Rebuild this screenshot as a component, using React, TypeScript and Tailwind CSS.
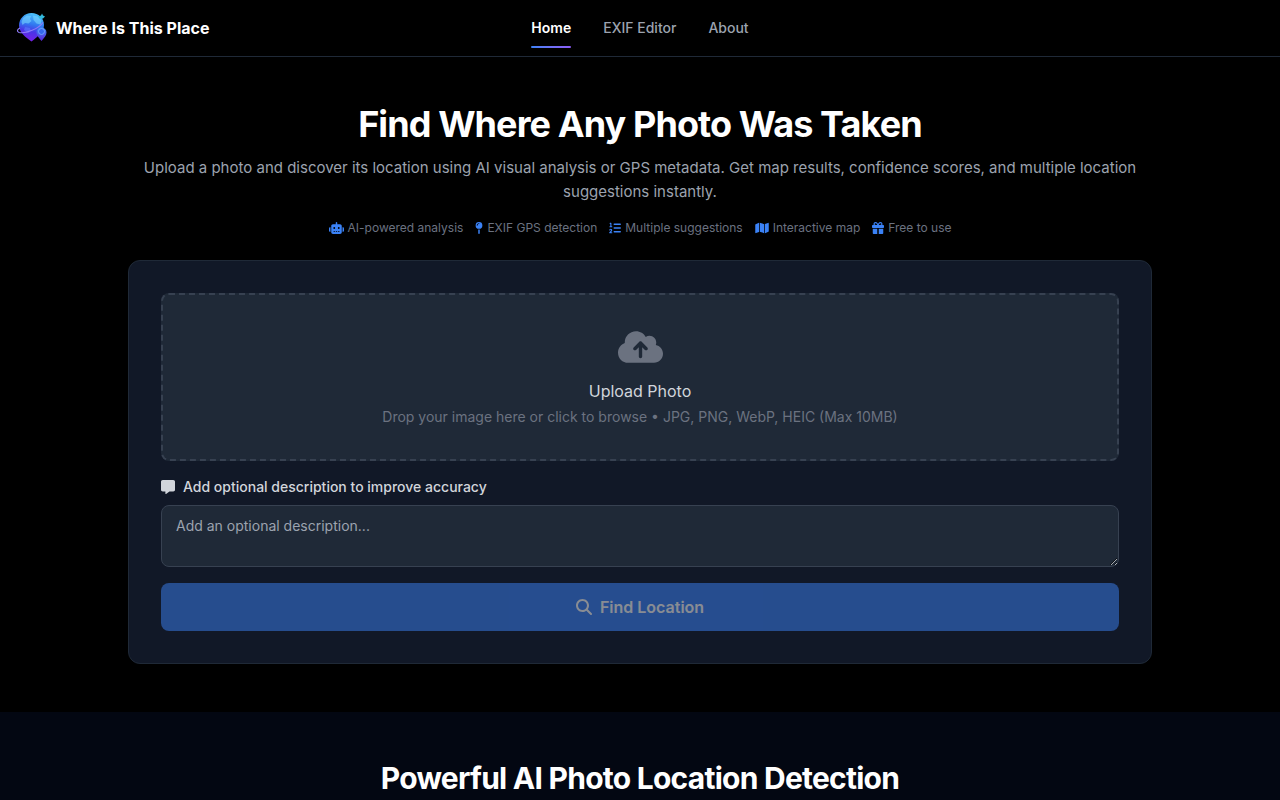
import type { IconType } from "react-icons";
import {
    FaCloudArrowUp,
    FaGift,
    FaListOl,
    FaMagnifyingGlass,
    FaMap,
    FaMapPin,
    FaMessage,
    FaRobot,
} from "react-icons/fa6";

interface NavItem {
    label: string;
    href: string;
    active?: boolean;
}

const navItems: NavItem[] = [
    { label: "Home", href: "#home", active: true },
    { label: "EXIF Editor", href: "#exif-editor" },
    { label: "About", href: "#about" },
];

const features: { label: string; icon: IconType; width: string }[] = [
    { label: "AI-powered analysis", icon: FaRobot, width: "w-[15px]" },
    { label: "EXIF GPS detection", icon: FaMapPin, width: "w-2" },
    { label: "Multiple suggestions", icon: FaListOl, width: "w-3" },
    { label: "Interactive map", icon: FaMap, width: "w-3.5" },
    { label: "Free to use", icon: FaGift, width: "w-3" },
];

function Logo() {
    return (
        <svg viewBox="0 0 32 32" className="size-8" aria-hidden="true">
            <defs>
                <linearGradient id="globe" x1="0.6" y1="0" x2="0.4" y2="1">
                    <stop offset="0" stopColor="#4cc4fb" />
                    <stop offset="0.4" stopColor="#3178f0" />
                    <stop offset="0.65" stopColor="#4a34e6" />
                    <stop offset="1" stopColor="#7a1fe8" />
                </linearGradient>
                <linearGradient id="pin" x1="0" y1="0" x2="0" y2="1">
                    <stop offset="0" stopColor="#3f8df5" />
                    <stop offset="1" stopColor="#5a22d8" />
                </linearGradient>
            </defs>
            <path d="M3 13.500C3 6.500 8.500 1 15.500 1S28 6 28 13c0 6.500-5.500 11-12.500 16.500C9 25 3 20 3 13.500z" fill="url(#globe)" />
            <path d="M7 6l4-2.500 4 .5-1 3 1.500 2-3 2.500-3.500-.5-2.500 2-1-3zM17 3.500l5 1 3.500 4-1 4-4-1-3-3.500z" fill="#7dd8ff" opacity="0.55" />
            <path d="M9 15l5 1 1 3-3 2-4-3z" fill="#5a7cff" opacity="0.6" />
            <path d="M25.500 29c-3-3.500-5-5.500-5-8.500a5 5 0 0 1 10 0c0 3-2 5-5 8.500z" fill="url(#pin)" />
            <circle cx="25.500" cy="19.500" r="3" fill="#3568ec" stroke="#79a9ff" strokeWidth="0.8" />
            <path d="M4 16c-3 1.500-3.500 3.500-1 4.500 7 1.500 20-4 24-10" fill="none" stroke="#8f7bfa" strokeWidth="1.100" />
            <path d="M22 4.500l3-1 1-2 1 2 2 1-2 2-3 .5z" fill="#32b9dc" />
        </svg>
    );
}

function Header() {
    return (
        <header className="border-b border-[#1f2937]">
            <div className="grid h-14 grid-cols-[1fr_auto_1fr] items-center px-4">
                <a href="#home" className="flex items-center gap-2 text-base font-bold text-white">
                    <Logo />
                    Where Is This Place
                </a>
                <nav className="flex gap-8 text-sm font-medium">
                    {navItems.map((item) => (
                        <a
                            key={item.label}
                            href={item.href}
                            className={item.active ? "relative py-2 font-semibold text-white" : "py-2 text-[#9ca3af]"}
                        >
                            {item.label}
                            {item.active && (
                                <span className="absolute inset-x-0 -bottom-0.5 h-0.5 rounded-full bg-linear-to-r from-[#3b82f6] to-[#8b5cf6]" />
                            )}
                        </a>
                    ))}
                </nav>
            </div>
        </header>
    );
}

function UploadCard() {
    return (
        <form className="flex flex-col gap-4 rounded-xl border border-[#1f2937] bg-[#111827] p-8">
            <button
                type="button"
                className="flex w-full flex-col items-center rounded-lg border-2 border-dashed border-[#374151] bg-[#1f2937] p-8"
            >
                <span className="mb-3 flex h-10 items-center">
                    <FaCloudArrowUp className="h-9 w-[45px] text-[#6b7280]" />
                </span>
                <span className="mb-1 text-base text-[#d1d5db]">Upload Photo</span>
                <span className="text-sm text-[#6b7280]">
                    Drop your image here or click to browse • JPG, PNG, WebP, HEIC (Max 10MB)
                </span>
            </button>

            <div>
                <label
                    htmlFor="description"
                    className="mb-2 flex items-center gap-2 text-sm font-medium text-[#d1d5db]"
                >
                    <FaMessage className="size-3.5" />
                    Add optional description to improve accuracy
                </label>
                <textarea
                    id="description"
                    rows={2}
                    placeholder="Add an optional description..."
                    className="block w-full rounded-lg border border-[#374151] bg-[#1f2937] px-3.5 py-2.5 text-sm text-white placeholder:text-[#9ca3af]"
                />
            </div>

            <button
                type="submit"
                disabled
                className="flex h-12 items-center justify-center gap-2 rounded-lg bg-[#3b82f6] text-base font-semibold text-white opacity-50"
            >
                <FaMagnifyingGlass className="size-4" />
                Find Location
            </button>
        </form>
    );
}

export default function App() {
    return (
        <div className="min-h-screen bg-black font-['Inter',sans-serif] text-white">
            <Header />
            <main>
                <section className="mx-auto max-w-5xl py-12">
                    <div className="text-center">
                        <h1 className="mb-3 text-4xl leading-[39px] font-bold tracking-tight">
                            Find Where Any Photo Was Taken
                        </h1>
                        <p className="mb-4 text-[15px] leading-6 text-[#9ca3af]">
                            Upload a photo and discover its location using AI visual analysis or GPS metadata. Get map
                            results, confidence scores, and multiple location suggestions instantly.
                        </p>
                        <ul className="mb-6 flex flex-wrap justify-center gap-3 text-xs text-[#6b7280]">
                            {features.map(({ label, icon: Icon, width }) => (
                                <li key={label} className="flex items-center gap-1">
                                    <Icon className={`h-3 ${width} text-[#3b82f6]`} />
                                    {label}
                                </li>
                            ))}
                        </ul>
                    </div>
                    <UploadCard />
                </section>
                <section className="bg-[#030712] py-12 text-center">
                    <h2 className="text-3xl font-bold tracking-tight">Powerful AI Photo Location Detection</h2>
                </section>
            </main>
        </div>
    );
}
